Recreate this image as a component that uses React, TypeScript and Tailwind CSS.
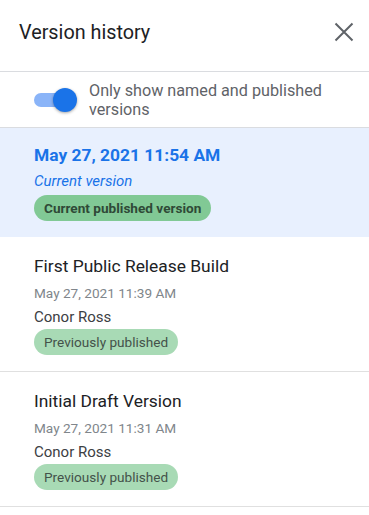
type Version = {
  title: string;
  date: string;
  author: string;
};

const versions: Version[] = [
  { title: 'First Public Release Build', date: 'May 27, 2021 11:39 AM', author: 'Conor Ross' },
  { title: 'Initial Draft Version', date: 'May 27, 2021 11:31 AM', author: 'Conor Ross' },
];

export default function App() {
  return (
    <div className="h-[515px] w-[369px] overflow-hidden bg-white font-['Roboto',sans-serif]">
      <header className="flex h-[72px] items-start justify-between border-b border-[#dadce0] pl-[19px] pr-[15px] pt-[19px]">
        <h1 className="text-[19.8px] leading-[28px] text-[#202124]">Version history</h1>
        <button type="button" className="mt-[3px] text-[#5f6368]">
          <svg viewBox="0 0 20 20" className="h-[20px] w-[20px]" fill="none" stroke="currentColor" strokeWidth="2">
            <path d="M1.5 1.5 L18.5 18.5 M18.5 1.5 L1.5 18.5" />
          </svg>
        </button>
      </header>

      <div className="flex items-start gap-[12px] border-b border-[#dadce0] pb-[8px] pl-[34px] pr-[20px] pt-[9px]">
        <div className="relative mt-[7px] h-[24px] w-[43px] shrink-0">
          <div className="absolute left-0 top-[5px] h-[14px] w-[38px] rounded-full bg-[#8ab4f8]" />
          <div className="absolute left-[19px] top-0 h-[24px] w-[24px] rounded-full bg-[#1a73e8] shadow-[0_1px_3px_rgba(0,0,0,0.35)]" />
        </div>
        <p className="text-[16.2px] leading-[19px] text-[#5f6368]">Only show named and published versions</p>
      </div>

      <div className="flex flex-col bg-[#e8f0fe] pb-[16px] pl-[34px] pt-[15px]">
        <p className="text-[17.4px] font-bold leading-[24px] text-[#1a73e8]">May 27, 2021 11:54 AM</p>
        <p className="mt-[4px] text-[15px] italic leading-[20px] text-[#1a73e8]">Current version</p>
        <span className="mt-[4px] inline-flex h-[26px] w-fit items-center rounded-full bg-[#81c995] px-[10px] text-[13.6px] font-bold text-[#2f4a37]">
          Current published version
        </span>
      </div>

      {versions.map((v) => (
        <div key={v.title} className="flex flex-col border-b border-[#e0e0e0] pb-[16px] pl-[34px] pt-[17px]">
          <p className="text-[17.4px] leading-[24px] text-[#202124]">{v.title}</p>
          <p className="mt-[5px] text-[13.6px] leading-[20px] text-[#80868b]">{v.date}</p>
          <p className="mt-[4px] text-[15px] leading-[20px] text-[#3c4043]">{v.author}</p>
          <span className="mt-[2px] inline-flex h-[26px] w-fit items-center rounded-full bg-[#a8dab5] px-[10px] text-[13.6px] text-[#44524a]">
            Previously published
          </span>
        </div>
      ))}
    </div>
  );
}
